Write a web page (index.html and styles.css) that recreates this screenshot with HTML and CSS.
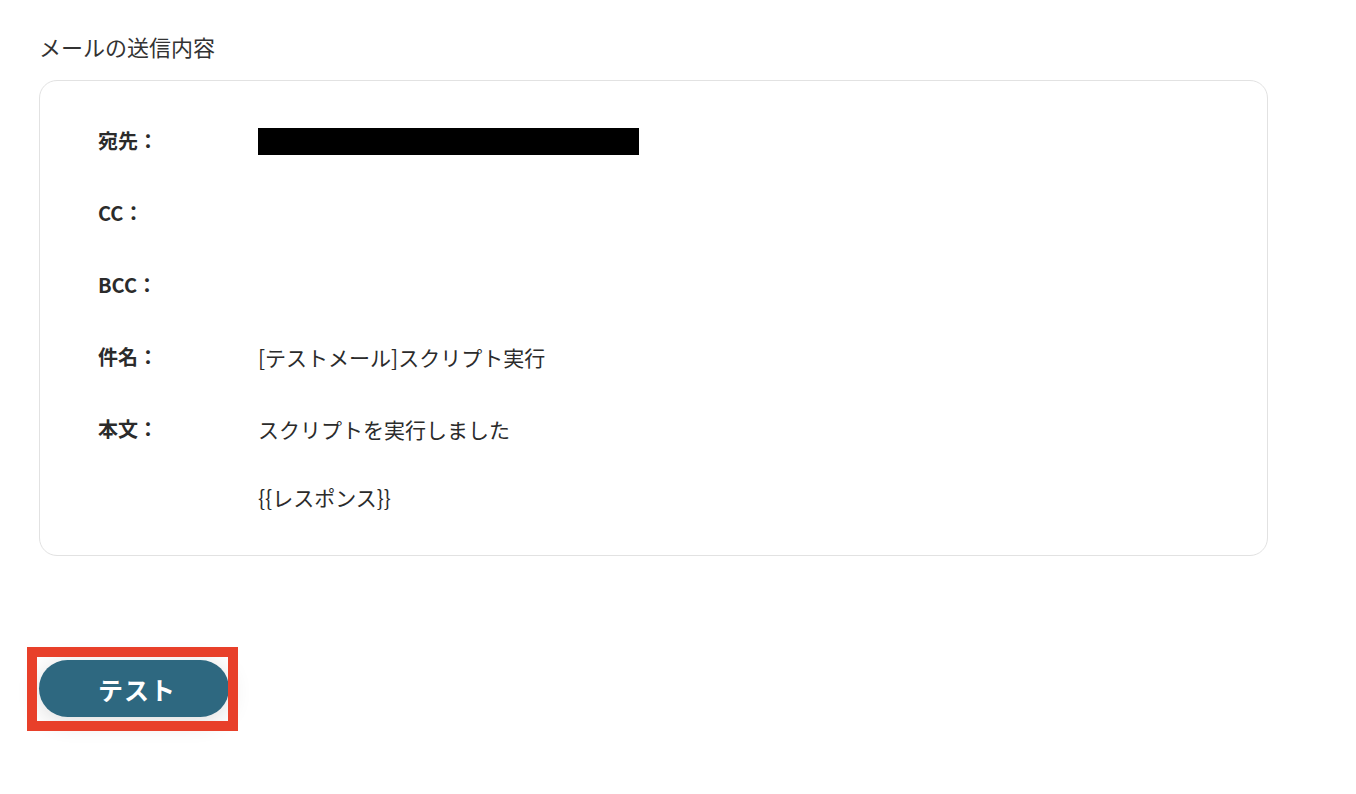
FILE: index.html
```html
<!DOCTYPE html>
<html lang="ja">
<head>
    <meta charset="UTF-8">
    <meta name="viewport" content="width=device-width, initial-scale=1.0">
    <title>メールの送信内容</title>
    <link rel="stylesheet" href="styles.css">
</head>
<body>
    <div id="container">
        <h2 class="section-title">メールの送信内容</h2>

        <div class="mail-card">
            <div class="mail-label">宛先：</div>
            <div class="mail-value"><span class="masked"></span></div>

            <div class="mail-label">CC：</div>
            <div class="mail-value"></div>

            <div class="mail-label">BCC：</div>
            <div class="mail-value"></div>

            <div class="mail-label">件名：</div>
            <div class="mail-value">[テストメール]スクリプト実行</div>

            <div class="mail-label">本文：</div>
            <div class="mail-value">スクリプトを実行しました<br><br>{{レスポンス}}</div>
        </div>

        <div class="btn-area">
            <button class="btn-test">テスト</button>
            <!-- 注目枠 -->
            <div class="highlight"></div>
        </div>
    </div>
</body>
</html>
```

FILE: styles.css
```css
body{
    margin: 0;
    min-height: 794px;
    background-color: #fff;
    font-family: 'Noto Sans CJK JP', 'Noto Sans', sans-serif;
    color: #333;
}

#container{
    padding: 31px 39px 80px;
    width: 1229px;
}

.section-title{
    margin: 0 0 19px;
    font-size: 22px;
    font-weight: normal;
    line-height: 30px;
    color: #333;
}

.mail-card{
    display: grid;
    grid-template-columns: 160px 1fr;
    row-gap: 38px;
    padding: 43px 58px 41px;
    border: 1px solid #e2e2e2;
    border-radius: 18px;
    font-size: 21px;
    line-height: 34px;
}

.mail-label{
    font-size: 20px;
    font-weight: bold;
    color: #2b2b2b;
}

.mail-value{
    min-height: 34px;
    color: #2b2b2b;
}

.masked{
    display: inline-block;
    width: 381px;
    height: 27px;
    margin-top: 4px;
    vertical-align: top;
    background-color: #000;
}

.btn-area{
    position: relative;
    width: 190px;
    margin-top: 104px;
}

.btn-test{
    display: block;
    width: 190px;
    height: 57px;
    padding: 0 0 0 6px;
    border: 0;
    border-radius: 29px;
    background-color: #2e6880;
    box-shadow: 0 4px 24px rgba(0, 0, 0, 0.14);
    color: #fff;
    font-family: 'Noto Sans CJK JP', sans-serif;
    font-size: 25px;
    font-weight: bold;
    letter-spacing: 1px;
}
.btn-test:hover{
    cursor: pointer;
}

.highlight{
    position: absolute;
    left: -12px;
    top: -13px;
    width: 191px;
    height: 64px;
    border: 10px solid #e8402a;
    pointer-events: none;
}
```
